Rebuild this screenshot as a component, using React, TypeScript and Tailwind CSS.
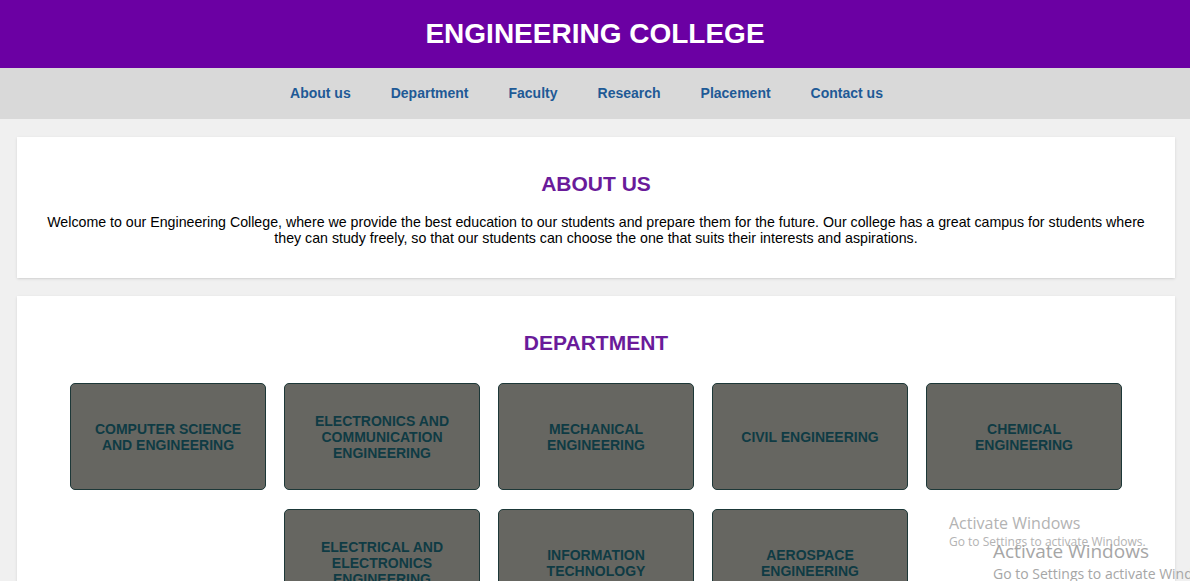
import React from 'react';

const navLinks = ['About us', 'Department', 'Faculty', 'Research', 'Placement', 'Contact us'];

const departments = [
  'Computer Science and Engineering',
  'Electronics and Communication Engineering',
  'Mechanical Engineering',
  'Civil Engineering',
  'Chemical Engineering',
  'Electrical and Electronics Engineering',
  'Information Technology',
  'Aerospace Engineering',
];

const font = { fontFamily: '"Liberation Sans", Arial, sans-serif' };

const App: React.FC = () => {
  return (
    <div className="relative min-h-[581px] bg-[#f0f0f0] overflow-hidden" style={font}>
      <header className="h-[68px] bg-[#6b00a3] flex items-center justify-center">
        <h1 className="text-white font-bold text-[28px] leading-none">ENGINEERING COLLEGE</h1>
      </header>

      <nav className="h-[51px] bg-[#d9d9d9] flex items-center justify-center pr-[17px]">
        {navLinks.map(link => (
          <a key={link} href="#" className="px-5 text-[14px] font-bold text-[#1f5a96]">
            {link}
          </a>
        ))}
      </nav>

      <main className="ml-[17px] mr-[15px] pt-[18px] flex flex-col gap-[18px]">
        <section className="bg-white shadow-sm pt-[35px] pb-[32px] px-6 text-center">
          <h2 className="text-[21px] leading-[24px] font-bold text-[#6a1b9a]">ABOUT US</h2>
          <p className="mt-[18px] text-[14.2px] leading-[16px] text-black">
            Welcome to our Engineering College, where we provide the best education to our students and prepare them for the future. Our college has a great campus for students where they can study freely, so that our students can choose the one that suits their interests and aspirations.
          </p>
        </section>

        <section className="bg-white shadow-sm pt-[35px] pb-8 px-8 text-center">
          <h2 className="text-[21px] leading-[24px] font-bold text-[#6a1b9a]">DEPARTMENT</h2>
          <div className="mt-[28px] flex flex-wrap justify-center gap-x-[18px] gap-y-[19px]">
            {departments.map(dep => (
              <div
                key={dep}
                className="w-[196px] h-[107px] bg-[#666661] border border-[#1d3838] rounded-[5px] flex items-center justify-center px-5"
              >
                <span className="uppercase font-bold text-[14px] leading-[16px] text-[#0f3b44]">{dep}</span>
              </div>
            ))}
          </div>
        </section>
      </main>

      <div
        className="absolute left-[949px] top-[512px] text-[#b3b3b3] pointer-events-none"
        style={{ fontFamily: '"Open Sans", "Noto Sans", sans-serif' }}
      >
        <div className="text-[16px] leading-[22px]">Activate Windows</div>
        <div className="text-[12px] leading-[16px]">Go to Settings to activate Windows.</div>
      </div>
      <div
        className="absolute left-[993px] top-[538px] text-[#a6a6a6] pointer-events-none whitespace-nowrap"
        style={{ fontFamily: '"Open Sans", "Noto Sans", sans-serif' }}
      >
        <div className="text-[19px] leading-[26px]">Activate Windows</div>
        <div className="text-[14px] leading-[20px]">Go to Settings to activate Windows.</div>
      </div>
    </div>
  );
};

export default App;
